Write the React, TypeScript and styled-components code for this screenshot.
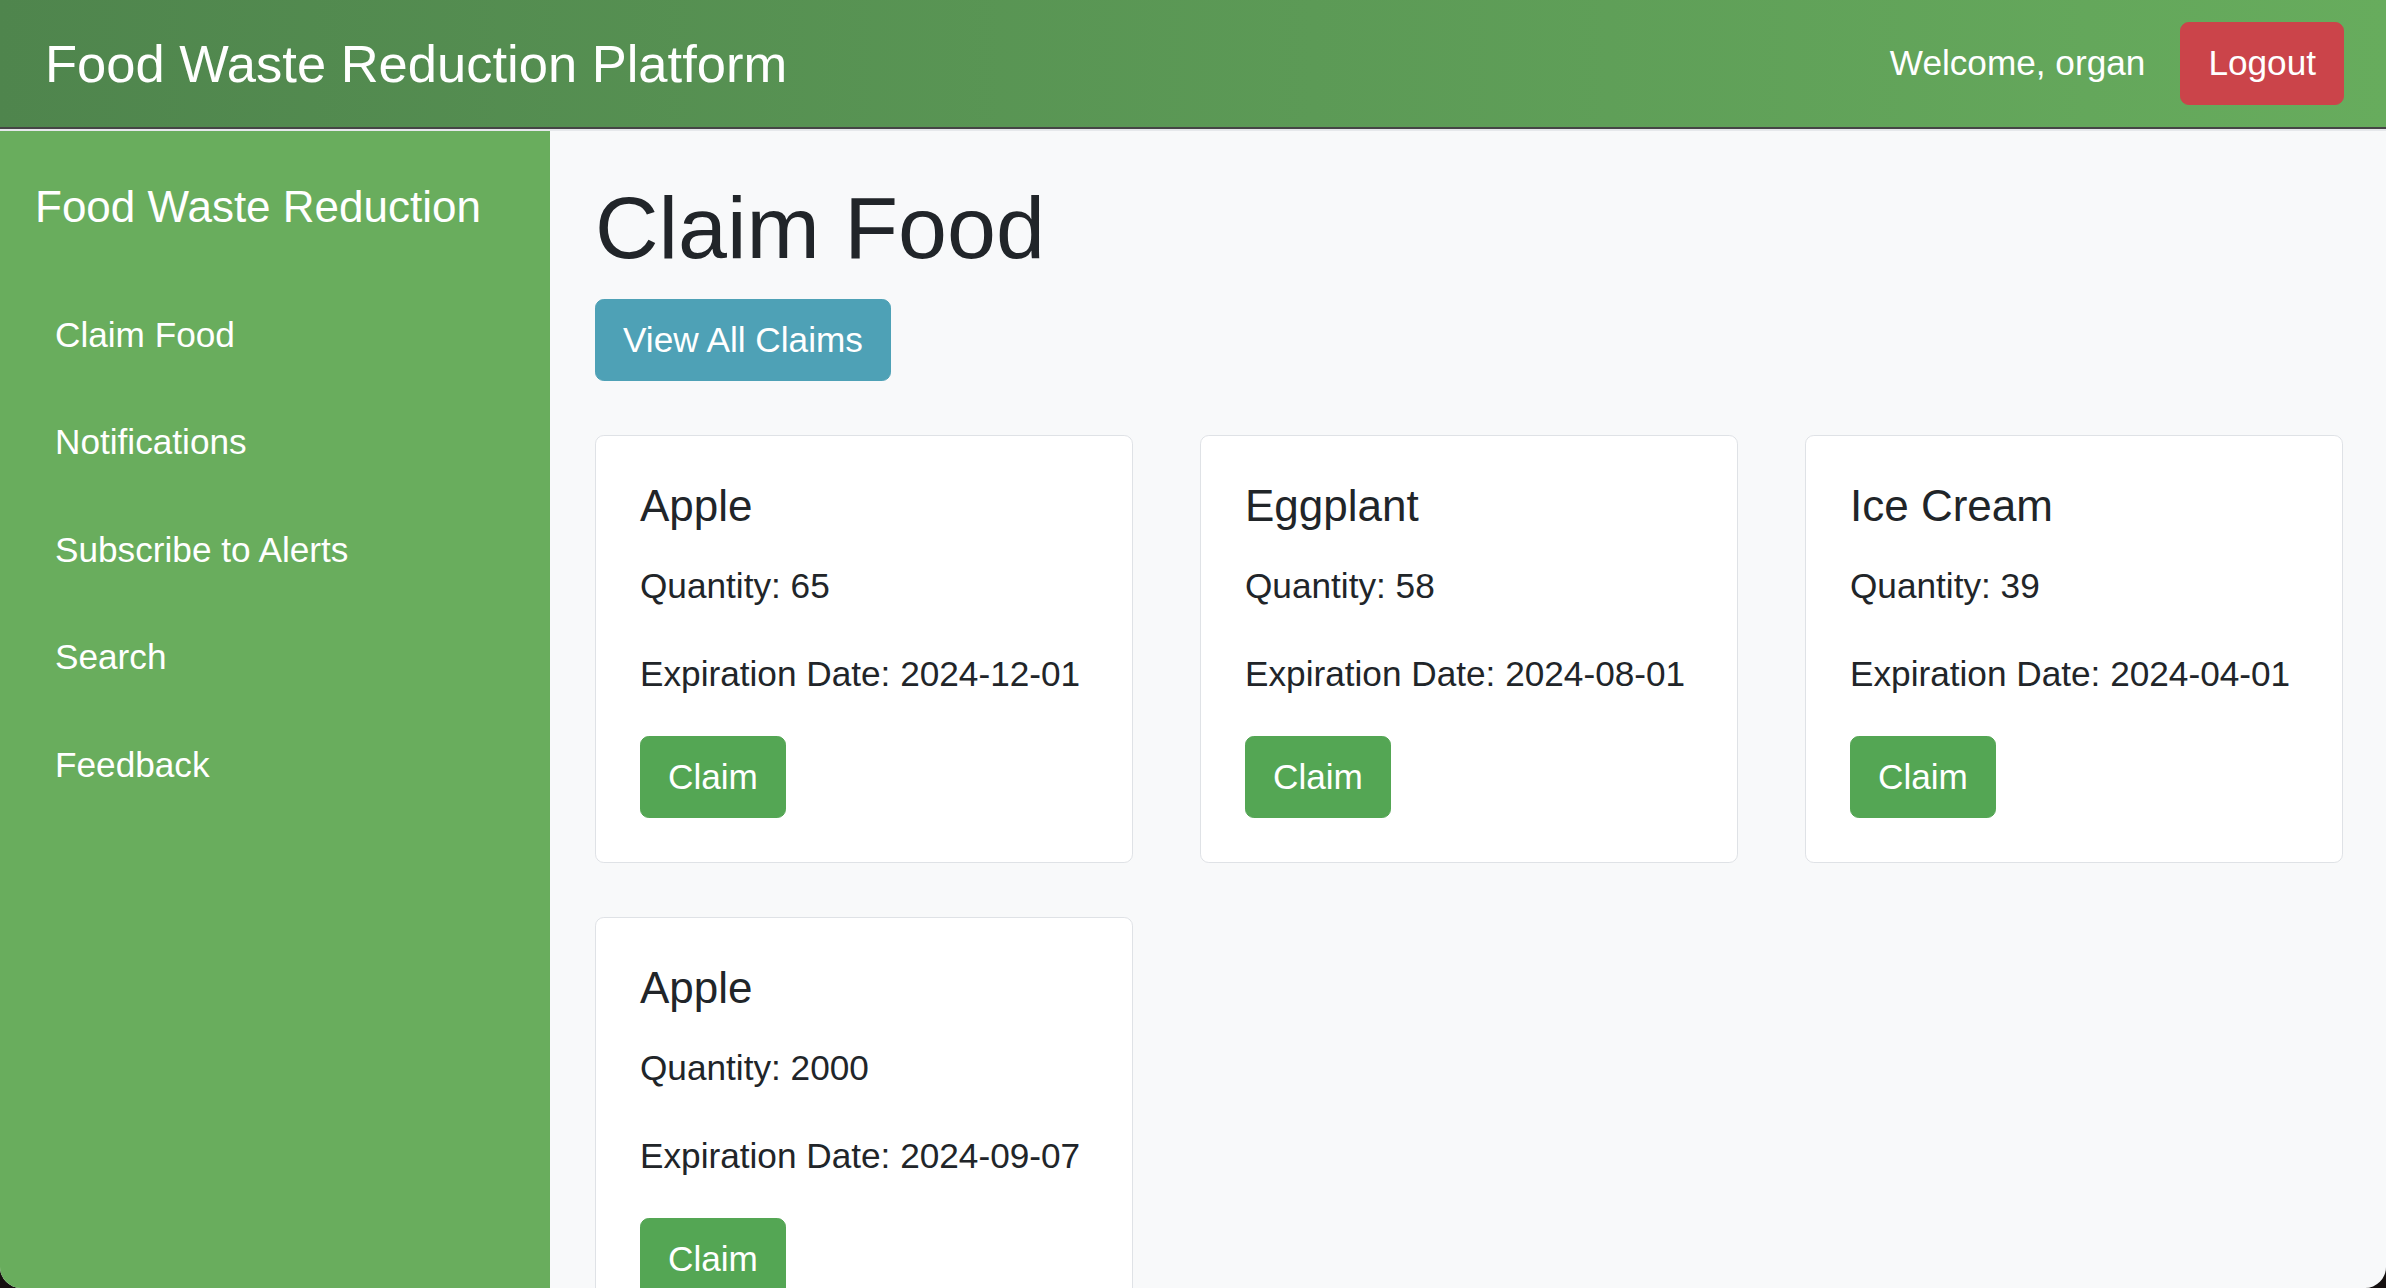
import React from "react";
import styled, { createGlobalStyle, css } from "styled-components";

const GlobalStyle = createGlobalStyle`
  html, body {
    margin: 0;
    padding: 0;
    background: #151010;
  }
  body {
    font-family: "Liberation Sans", Arial, Helvetica, sans-serif;
    color: #212529;
  }
  * { box-sizing: border-box; }
`;

const Window = styled.div`
  height: 100vh;
  display: flex;
  flex-direction: column;
  overflow: hidden;
  background: #f8f9fa;
  border-radius: 0 0 21px 21px;
`;

const TopBar = styled.header`
  flex-shrink: 0;
  height: 129px;
  display: flex;
  align-items: center;
  justify-content: space-between;
  padding: 0 42px 0 45px;
  background: linear-gradient(90deg, #4f854d 0%, #5c9a56 55%, #67ac5d 100%);
  border-bottom: 2px solid #454545;
`;

const Brand = styled.div`
  color: #ffffff;
  font-size: 52.5px;
  line-height: 1.2;
  white-space: nowrap;
`;

const UserArea = styled.div`
  display: flex;
  align-items: center;
  gap: 35px;
`;

const Welcome = styled.span`
  color: #ffffff;
  font-size: 35.2px;
  line-height: 1.5;
`;

type Variant = "danger" | "info" | "success";

const variantColors: Record<Variant, string> = {
  danger: "#cb444a",
  info: "#4ea1b6",
  success: "#54a654",
};

const Button = styled.button<{ $variant: Variant }>`
  font-family: inherit;
  font-size: 35.2px;
  line-height: 1.5;
  padding: 14px 27px;
  border-radius: 8.8px;
  color: #ffffff;
  cursor: pointer;
  white-space: nowrap;
  ${({ $variant }) => css`
    background: ${variantColors[$variant]};
    border: 1px solid ${variantColors[$variant]};
  `}
`;

const Body = styled.div`
  flex: 1;
  min-height: 0;
  display: flex;
  border-top: 2px solid #e6e8eb;
`;

const Sidebar = styled.aside`
  flex-shrink: 0;
  width: 550px;
  background: #69ad5d;
  padding: 50px 35px;
`;

const SideTitle = styled.h5`
  margin: 0 0 47.5px;
  font-size: 44px;
  font-weight: 400;
  line-height: 1.2;
  color: #ffffff;
  white-space: nowrap;
`;

const NavList = styled.ul`
  list-style: none;
  margin: 0;
  padding: 0;
`;

const NavLink = styled.a`
  display: block;
  padding: 27.4px 20px;
  font-size: 35.2px;
  line-height: 52.8px;
  color: #ffffff;
  text-decoration: none;
`;

const Main = styled.main`
  flex: 1;
  min-width: 0;
  padding: 44px 43px 44px 45px;
  overflow: hidden;
`;

const PageTitle = styled.h1`
  margin: 0 0 18px;
  font-size: 88px;
  font-weight: 400;
  line-height: 1.2;
  color: #212529;
`;

const ActionRow = styled.div`
  margin-bottom: 54px;
`;

const CardGrid = styled.div`
  display: grid;
  grid-template-columns: repeat(3, 1fr);
  column-gap: 67px;
  row-gap: 54px;
`;

const Card = styled.div`
  background: #ffffff;
  border: 1px solid #dfe2e6;
  border-radius: 8.8px;
  padding: 44px;
`;

const CardTitle = styled.h5`
  margin: 0 0 26.4px;
  font-size: 44px;
  font-weight: 400;
  line-height: 1.2;
  color: #212529;
`;

const CardText = styled.p`
  margin: 0 0 35.2px;
  font-size: 35.2px;
  line-height: 52.8px;
  color: #212529;
  white-space: nowrap;
`;

const navItems = ["Claim Food", "Notifications", "Subscribe to Alerts", "Search", "Feedback"];

const foods = [
  { name: "Apple", qty: 65, date: "2024-12-01" },
  { name: "Eggplant", qty: 58, date: "2024-08-01" },
  { name: "Ice Cream", qty: 39, date: "2024-04-01" },
  { name: "Apple", qty: 2000, date: "2024-09-07" },
];

export default function App() {
  return (
    <>
      <GlobalStyle />
      <Window>
        <TopBar>
          <Brand>Food Waste Reduction Platform</Brand>
          <UserArea>
            <Welcome>Welcome, organ</Welcome>
            <Button $variant="danger">Logout</Button>
          </UserArea>
        </TopBar>
        <Body>
          <Sidebar>
            <SideTitle>Food Waste Reduction</SideTitle>
            <NavList>
              {navItems.map((item) => (
                <li key={item}>
                  <NavLink href="#">{item}</NavLink>
                </li>
              ))}
            </NavList>
          </Sidebar>
          <Main>
            <PageTitle>Claim Food</PageTitle>
            <ActionRow>
              <Button $variant="info">View All Claims</Button>
            </ActionRow>
            <CardGrid>
              {foods.map((f, i) => (
                <Card key={i}>
                  <CardTitle>{f.name}</CardTitle>
                  <CardText>Quantity: {f.qty}</CardText>
                  <CardText>Expiration Date: {f.date}</CardText>
                  <Button $variant="success">Claim</Button>
                </Card>
              ))}
            </CardGrid>
          </Main>
        </Body>
      </Window>
    </>
  );
}
